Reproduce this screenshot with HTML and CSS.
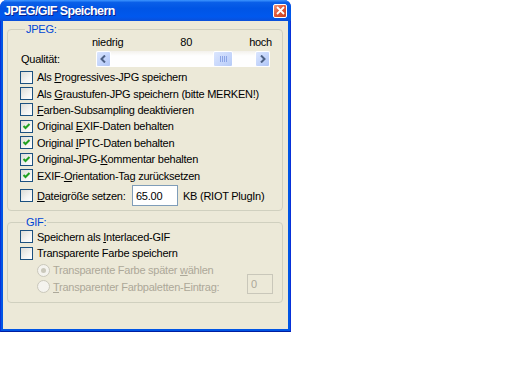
FILE: index.html
```html
<!DOCTYPE html>
<html lang="de">
<head>
  <meta charset="UTF-8">
  <title>JPEG/GIF Speichern</title>
  <link rel="stylesheet" href="styles.css">
</head>
<body>
  <div class="window">
    <div class="titlebar">
      <span class="title">JPEG/GIF Speichern</span>
      <span class="close-btn">
        <svg width="9" height="9" viewBox="0 0 9 9"><path d="M1 1 L8 8 M8 1 L1 8" stroke="#fff" stroke-width="1.8" fill="none"/></svg>
      </span>
    </div>

    <div class="client">
      <fieldset class="group">
        <legend>JPEG:</legend>
        <div class="scale-labels">
          <span>niedrig</span><span>80</span><span>hoch</span>
        </div>
        <div class="quality-row">
          <span class="quality-label">Qualität:</span>
          <div class="scrollbar">
            <span class="sb-btn">
              <svg width="7" height="8" viewBox="0 0 7 8"><path d="M5 0.5 L1.5 4 L5 7.5" stroke="#4d6185" stroke-width="2" fill="none"/></svg>
            </span>
            <div class="sb-track">
              <span class="sb-thumb"><i></i><i></i><i></i><i></i></span>
            </div>
            <span class="sb-btn">
              <svg width="7" height="8" viewBox="0 0 7 8"><path d="M2 0.5 L5.5 4 L2 7.5" stroke="#4d6185" stroke-width="2" fill="none"/></svg>
            </span>
          </div>
        </div>
        <label class="check"><span class="box"></span><span>Als <u>P</u>rogressives-JPG speichern</span></label>
        <label class="check"><span class="box"></span><span>Als <u>G</u>raustufen-JPG speichern (bitte MERKEN!)</span></label>
        <label class="check"><span class="box"></span><span><u>F</u>arben-Subsampling deaktivieren</span></label>
        <label class="check"><span class="box checked"></span><span>Original <u>E</u>XIF-Daten behalten</span></label>
        <label class="check"><span class="box checked"></span><span>Original <u>I</u>PTC-Daten behalten</span></label>
        <label class="check"><span class="box checked"></span><span>Original-JPG-<u>K</u>ommentar behalten</span></label>
        <label class="check"><span class="box checked"></span><span>EXIF-<u>O</u>rientation-Tag zurücksetzen</span></label>
        <div class="check size-row">
          <span class="box"></span><span class="size-label"><u>D</u>ateigröße setzen:</span>
          <span class="textbox size-box">65.00</span>
          <span>KB (RIOT PlugIn)</span>
        </div>
      </fieldset>

      <fieldset class="group group-gif">
        <legend>GIF:</legend>
        <label class="check"><span class="box"></span><span>Speichern als <u>I</u>nterlaced-GIF</span></label>
        <label class="check"><span class="box"></span><span>Transparente Farbe speichern</span></label>
        <div class="radio-row disabled"><span class="radio checked"></span><span>Transparente Farbe später <u>w</u>ählen</span></div>
        <div class="radio-row disabled">
          <span class="radio"></span><span class="palette-label"><u>T</u>ransparenter Farbpaletten-Eintrag:</span>
          <span class="textbox palette-box">0</span>
        </div>
      </fieldset>
    </div>
  </div>
</body>
</html>
```

FILE: styles.css
```css
* {
  margin: 0;
  padding: 0;
  box-sizing: border-box;
}
html, body {
  background: #fff;
}
body {
  font-family: Tahoma, "Liberation Sans", Arial, sans-serif;
  font-size: 11px;
  letter-spacing: -0.25px;
  color: #000;
}
u {
  text-decoration: underline;
  text-underline-offset: 1px;
}

/* window frame */
.window {
  width: 291px;
  height: 332px;
  display: flex;
  flex-direction: column;
  background: #0055e5;
  border: 1px solid #0831d9;
  border-top: none;
  border-bottom-color: #001ea0;
  border-radius: 7px 7px 0 0;
}
.titlebar {
  height: 21px;
  display: flex;
  align-items: center;
  justify-content: space-between;
  padding: 0 4px 0 4px;
  margin: 0 -1px;
  border-radius: 7px 7px 0 0;
  background: linear-gradient(to bottom, #3d95ff 0%, #0a5fe8 12%, #0055e5 40%, #0058ee 80%, #0a4fd9 100%);
}
.title {
  color: #fff;
  font-family: "Liberation Sans", sans-serif;
  font-weight: bold;
  font-size: 12.5px;
  letter-spacing: -0.6px;
  text-shadow: 1px 1px 0 #0a1e8c;
}
.close-btn {
  width: 14px;
  height: 14px;
  display: flex;
  align-items: center;
  justify-content: center;
  border: 1px solid #fff;
  border-radius: 2px;
  background: linear-gradient(135deg, #f09a7d 0%, #e2583a 45%, #c6401f 100%);
}
.client {
  flex: 1;
  margin: 0 2px 2px 2px;
  background: #ece9d8;
  padding: 2px 4px 0 4px;
}

/* group boxes */
.group {
  width: 276px;
  border: 1px solid #d0d0bf;
  border-radius: 4px;
  padding: 0 0 3px 12px;
}
.group legend {
  color: #0046d5;
  margin-left: 5px;
  padding: 0 1px;
  line-height: 13px;
}
.group-gif {
  margin-top: 5px;
  padding-bottom: 7px;
}

.scale-labels {
  display: flex;
  justify-content: space-between;
  width: 180px;
  margin-left: 72px;
  height: 13px;
  line-height: 13px;
}
.quality-row {
  display: flex;
  align-items: center;
  height: 20px;
}
.quality-label {
  width: 76px;
  padding-left: 1px;
}

/* scrollbar */
.scrollbar {
  width: 174px;
  height: 16px;
  display: flex;
  background: linear-gradient(to bottom, #f3f1ec 0%, #fefefe 30%, #fefefe 100%);
}
.sb-btn {
  width: 15px;
  height: 16px;
  display: flex;
  align-items: center;
  justify-content: center;
  border: 1px solid #fff;
  border-radius: 2px;
  background: linear-gradient(135deg, #dbe6fe 0%, #c1d3fb 60%, #afc5f6 100%);
}
.sb-track {
  flex: 1;
  display: flex;
  justify-content: flex-end;
  padding-right: 22px;
}
.sb-thumb {
  width: 20px;
  height: 16px;
  display: flex;
  gap: 1px;
  align-items: center;
  justify-content: center;
  border: 1px solid #fff;
  border-radius: 2px;
  background: linear-gradient(135deg, #dbe6fe 0%, #c6d6fb 60%, #b6cbf7 100%);
}
.sb-thumb i {
  width: 1px;
  height: 6px;
  background: #8ca5e6;
}

/* checkboxes */
.check {
  display: flex;
  align-items: center;
  height: 16.4px;
}
.box {
  width: 13px;
  height: 13px;
  margin-right: 4px;
  flex-shrink: 0;
  border: 1px solid #1c5180;
  background: linear-gradient(135deg, #dcdcd7 0%, #f4f4f2 60%, #fff 100%);
}
.box.checked {
  background-image:
    url("data:image/svg+xml,%3Csvg xmlns='http://www.w3.org/2000/svg' width='11' height='11'%3E%3Cpath d='M2.5 5 L4.5 7 L8.5 3' stroke='%2321a121' stroke-width='2' fill='none'/%3E%3C/svg%3E"),
    linear-gradient(135deg, #dcdcd7 0%, #f4f4f2 60%, #fff 100%);
}
.size-row {
  height: 22px;
  margin-top: 1px;
}
.size-label {
  width: 95px;
}
.textbox {
  display: flex;
  align-items: center;
  height: 21px;
  border: 1px solid #7f9db9;
  background: #fff;
  padding-left: 3px;
}
.size-box {
  width: 46px;
  margin-right: 5px;
}

/* radios */
.group-gif .check {
  height: 16.5px;
}
.radio-row {
  display: flex;
  align-items: center;
  height: 16.8px;
  padding-left: 17px;
}
.radio-row.disabled {
  color: #aca899;
}
.radio {
  width: 13px;
  height: 13px;
  margin-right: 3px;
  border-radius: 50%;
  border: 1px solid #cac8bb;
  background: #f4f3ee;
  display: flex;
  align-items: center;
  justify-content: center;
}
.radio.checked::after {
  content: "";
  width: 5px;
  height: 5px;
  border-radius: 50%;
  background: #cac8bb;
}
.palette-label {
  width: 194px;
}
.palette-box {
  width: 26px;
  height: 20px;
  margin-top: -6px;
  border-color: #c9c7ba;
  background: #ece9d8;
  color: #aca899;
}
```
